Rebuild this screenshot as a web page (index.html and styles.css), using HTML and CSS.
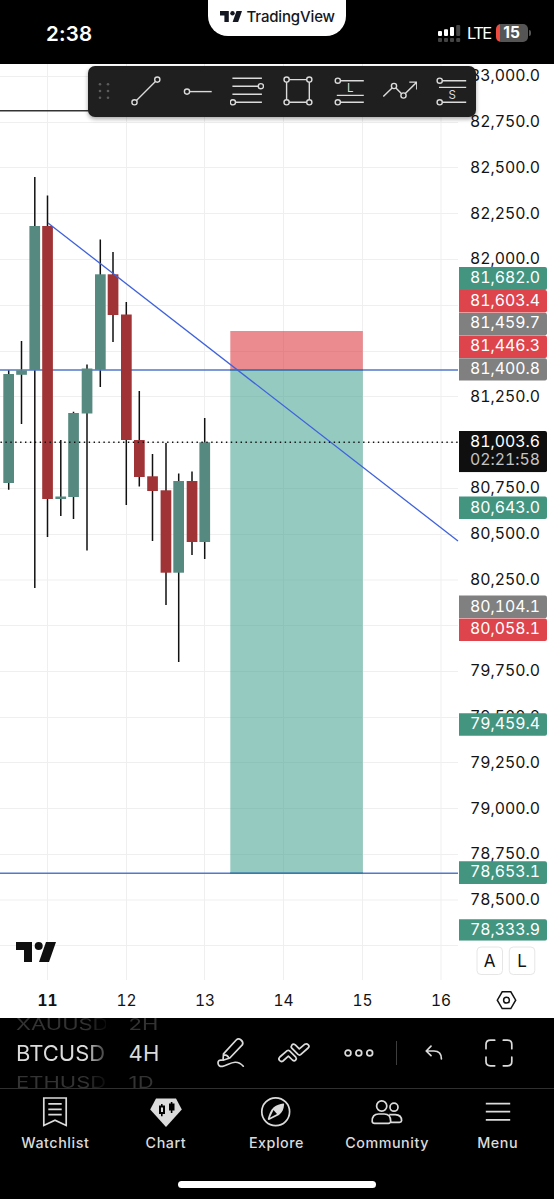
FILE: index.html
```html
<!DOCTYPE html>
<html lang="en">
<head>
    <meta charset="UTF-8">
    <meta name="viewport" content="width=device-width, initial-scale=1.0">
    <title>BTCUSD 4H - TradingView</title>
    <link rel="stylesheet" href="styles.css">
</head>
<body>
    <header class="status-bar">
        <div class="time">2:38</div>
        <div class="island">
            <svg class="island-logo" width="22" height="11" viewBox="0 0 40 20">
                <path d="M0 0H16V20H8V8H0Z"/><circle cx="22.7" cy="4" r="4"/><path d="M30 0H40L33 20H23Z"/>
            </svg>
            <span>TradingView</span>
        </div>
        <div class="status-right">
            <svg width="23" height="18" viewBox="0 0 23 18">
                <g fill="#fff">
                    <rect x="0" y="7" width="4" height="5" rx="1"/>
                    <rect x="6" y="5.3" width="4" height="6.7" rx="1"/>
                    <rect x="12" y="3" width="4" height="9" rx="1"/>
                </g>
                <g fill="#444">
                    <rect x="18.2" y="1" width="4" height="11" rx="1"/>
                    <rect x="0" y="14" width="4" height="4" rx="1"/>
                    <rect x="6" y="14" width="4" height="4" rx="1"/>
                    <rect x="12" y="14" width="4" height="4" rx="1"/>
                    <rect x="18.2" y="14" width="4" height="4" rx="1"/>
                </g>
            </svg>
            <span class="network">LTE</span>
            <div class="battery">15</div>
        </div>
    </header>

    <main class="chart">
        <svg class="chart-svg" width="554" height="954" viewBox="0 64 554 954">
            <!-- grid -->
            <path class="grid" d="M0 76.5H458M0 122.5H458M0 167.5H458M0 213.5H458M0 259.5H458M0 305.5H458M0 351.5H458M0 396.5H458M0 442.5H458M0 488.5H458M0 534.5H458M0 580H458M0 625.5H458M0 671.5H458M0 717.5H458M0 762.5H458M0 808.5H458M0 854.5H458M0 900H458M0 945.5H458"/>
            <path class="grid" d="M47.5 64V980M126.5 64V980M204.5 64V980M283.5 64V980M362.5 64V980M441 64V980"/>

            <path class="top-line" d="M0 110.8H458"/>

            <!-- wicks -->
            <path class="wick" d="M8.7 370V489.7M21.5 341V424M34.8 177V588M47.5 195.5V537M60.8 440V516M73.5 411.7V519M87 364.5V550.5M100.3 239.5V387M113 252V342M126.3 302V505M139.3 391V486.5M152.5 454V541M166 443V605M178.7 473.5V662M192 471.5V555M204.7 418V559"/>

            <path class="level" d="M0 370H458M0 873.2H458"/>

            <!-- candle bodies -->
            <g class="up">
                <rect x="3.3" y="374" width="10.7" height="109"/>
                <rect x="16.2" y="370.3" width="10.7" height="4.5"/>
                <rect x="29.4" y="226" width="10.7" height="144"/>
                <rect x="55.4" y="496.5" width="10.7" height="2.5"/>
                <rect x="68.2" y="413" width="10.7" height="84"/>
                <rect x="81.7" y="368.5" width="10.7" height="45"/>
                <rect x="95" y="274.3" width="10.7" height="95.5"/>
                <rect x="173.3" y="481" width="10.7" height="91.7"/>
                <rect x="199.4" y="442.3" width="10.7" height="99.7"/>
            </g>
            <g class="down">
                <rect x="42.2" y="226" width="10.7" height="273"/>
                <rect x="107.7" y="274.3" width="10.7" height="40.7"/>
                <rect x="121" y="314.5" width="10.7" height="125.5"/>
                <rect x="134" y="440" width="10.7" height="37"/>
                <rect x="147.2" y="476.3" width="10.7" height="14.7"/>
                <rect x="160.6" y="490.3" width="10.7" height="82.4"/>
                <rect x="186.7" y="481" width="10.7" height="61"/>
            </g>

            <!-- short position -->
            <rect class="box-stop" x="230.3" y="331" width="132.5" height="39"/>
            <rect class="box-profit" x="230.3" y="370" width="132.5" height="503"/>
            <path class="level level-box" d="M230 370H363M230 873.2H363"/>
            <path class="trend" d="M48 223L458 541"/>
            <path class="last-price" d="M0.5 442.3H458"/>

            <!-- price scale -->
            <g class="price">
                <text x="540" y="81.3">83,000.0</text>
                <text x="540" y="126.8">82,750.0</text>
                <text x="540" y="172.8">82,500.0</text>
                <text x="540" y="218.6">82,250.0</text>
                <text x="540" y="264">82,000.0</text>
                <text x="540" y="401.8">81,250.0</text>
                <text x="540" y="493">80,750.0</text>
                <text x="540" y="539">80,500.0</text>
                <text x="540" y="584.6">80,250.0</text>
                <text x="540" y="676.3">79,750.0</text>
                <text x="540" y="721.8">79,500.0</text>
                <text x="540" y="768">79,250.0</text>
                <text x="540" y="813.5">79,000.0</text>
                <text x="540" y="859.3">78,750.0</text>
                <text x="540" y="905">78,500.0</text>
            </g>
            <g class="tag tag-green">
                <rect x="457" y="267" width="90" height="23" rx="2"/>
                <rect x="457" y="496.5" width="90" height="22.5" rx="2"/>
                <rect x="457" y="713.3" width="90" height="22.5" rx="2"/>
                <rect x="457" y="861.3" width="90" height="22.7" rx="2"/>
                <rect x="457" y="919.3" width="90" height="21.5" rx="2"/>
            </g>
            <g class="tag tag-red">
                <rect x="457" y="290" width="90" height="22.5" rx="2"/>
                <rect x="457" y="335.5" width="90" height="22.5" rx="2"/>
                <rect x="457" y="618.5" width="90" height="22.5" rx="2"/>
            </g>
            <g class="tag tag-gray">
                <rect x="457" y="312.7" width="90" height="22.5" rx="2"/>
                <rect x="457" y="358.2" width="90" height="22.3" rx="2"/>
                <rect x="457" y="595.6" width="90" height="22.5" rx="2"/>
            </g>
            <g class="tag tag-black">
                <rect x="457" y="431" width="90" height="41.3" rx="2"/>
            </g>
            <g class="price price-tag">
                <text x="540" y="282.8">81,682.0</text>
                <text x="540" y="305.5">81,603.4</text>
                <text x="540" y="328.3">81,459.7</text>
                <text x="540" y="351.3">81,446.3</text>
                <text x="540" y="374">81,400.8</text>
                <text x="540" y="446.8">81,003.6</text>
                <text class="countdown" x="540" y="465.3">02:21:58</text>
                <text x="540" y="512.5">80,643.0</text>
                <text x="540" y="611.5">80,104.1</text>
                <text x="540" y="634.3">80,058.1</text>
                <text x="540" y="729.2">79,459.4</text>
                <text x="540" y="877">78,653.1</text>
                <text x="540" y="935.3">78,333.9</text>
            </g>

            <!-- time scale -->
            <g class="day">
                <text class="day-bold" x="47.5" y="1006.3">11</text>
                <text x="126.5" y="1006.3">12</text>
                <text x="205" y="1006.3">13</text>
                <text x="283.5" y="1006.3">14</text>
                <text x="362.5" y="1006.3">15</text>
                <text x="441" y="1006.3">16</text>
            </g>

            <g class="scale-btn">
                <rect x="477" y="947" width="25.5" height="27.5" rx="4"/>
                <rect x="509.3" y="947" width="25.5" height="27.5" rx="4"/>
                <text x="489.7" y="967">A</text>
                <text x="522" y="967">L</text>
            </g>
            <g class="scale-settings">
                <path d="M502.2 991.8H510.8L515.7 1000.2L510.8 1008.6H502.2L497.3 1000.2Z"/>
                <circle cx="506.5" cy="1000.2" r="2.9"/>
            </g>

            <g class="watermark">
                <path d="M16 942H32V962H24V950H16Z"/><circle cx="38.7" cy="946" r="4"/><path d="M46 942H56L49 962H39Z"/>
            </g>
        </svg>

        <div class="draw-bar">
            <svg class="handle" width="12" height="18" viewBox="0 0 12 18">
                <circle cx="2" cy="2.2" r="1.3"/><circle cx="10" cy="2.2" r="1.3"/>
                <circle cx="2" cy="9" r="1.3"/><circle cx="10" cy="9" r="1.3"/>
                <circle cx="2" cy="15.8" r="1.3"/><circle cx="10" cy="15.8" r="1.3"/>
            </svg>
            <svg class="tool" viewBox="0 0 34 34">
                <path d="M7.4 26.4L26.4 7.5"/>
                <circle cx="5.5" cy="28.3" r="2.6"/><circle cx="28.3" cy="5.6" r="2.6"/>
            </svg>
            <svg class="tool" viewBox="0 0 34 34">
                <path d="M9.6 17.6H31.7"/><circle cx="7" cy="17.6" r="2.6"/>
            </svg>
            <svg class="tool" viewBox="0 0 34 34">
                <path d="M2.4 4.3H31.9M2.4 12.2H28.3M2.4 20.3H31.9M5.5 28.3H31.9"/>
                <circle cx="30.9" cy="12.2" r="2.6"/><circle cx="2.9" cy="28.3" r="2.6"/>
            </svg>
            <svg class="tool" viewBox="0 0 34 34">
                <path d="M8.2 5.6H25.7M8.2 28.3H25.7M5.6 8.2V25.7M28.3 8.2V25.7"/>
                <circle cx="5.6" cy="5.6" r="2.6"/><circle cx="28.3" cy="5.6" r="2.6"/>
                <circle cx="5.6" cy="28.3" r="2.6"/><circle cx="28.3" cy="28.3" r="2.6"/>
            </svg>
            <svg class="tool" viewBox="0 0 34 34">
                <path d="M8.4 6.7H31.8M4.8 21.4H31.8M8.4 28.3H31.8"/>
                <circle cx="5.8" cy="6.7" r="2.6"/><circle cx="5.8" cy="28.3" r="2.6"/>
                <text x="18.3" y="18.2">L</text>
            </svg>
            <svg class="tool" viewBox="0 0 34 34">
                <path d="M0.3 22.5L9.1 13.9M12.9 13.9L18.6 19.7M22.3 19.6L33.6 8.3M26.3 8.1H33.8V15.6"/>
                <circle cx="11" cy="12" r="2.6"/><circle cx="20.5" cy="21.5" r="2.6"/>
            </svg>
            <svg class="tool" viewBox="0 0 34 34">
                <path d="M8.3 6.7H32.2M5 13.4H32.2M8.3 28.3H32.2"/>
                <circle cx="5.7" cy="6.7" r="2.6"/><circle cx="5.7" cy="28.3" r="2.6"/>
                <text x="18.3" y="25.2">S</text>
            </svg>
        </div>
    </main>

    <section class="symbol-bar">
        <div class="picker picker-symbol">
            <span class="dim">XAUUSD</span>
            <span>BTCUSD</span>
            <span class="dim">ETHUSD</span>
        </div>
        <div class="picker picker-interval">
            <span class="dim">2H</span>
            <span>4H</span>
            <span class="dim">1D</span>
        </div>
        <div class="actions">
            <svg width="28" height="30" viewBox="0 0 28 30">
                <path d="M6.5 15.8L19.2 2Q21.4 -0.2 24 2T25.5 6.6L12.8 20L6 22.2ZM6.8 16.8Q10.8 16.6 11.8 20.2M4.6 22.2Q1 21.8 1 25Q1.3 28.8 5.5 28.4C11 27.8 18.5 19.5 26.3 28.2"/>
            </svg>
            <svg width="32" height="20" viewBox="0 0 32 20">
                <path d="M1.8 14L9.2 7.6Q10.4 6.8 11.6 7.9L17.8 14.2Q19 15.8 17.6 17.2T14.4 17L10.4 13.2L5 18Q3.2 19.2 1.6 17.5T1.8 14Z"/>
                <path d="M17.3 1.9L21.3 5.9L26.9 1.2Q28.8 0.3 30.3 1.8T30.1 5L22.6 11.6Q21.3 12.5 20 11.4L13.8 5.1Q12.6 3.6 13.9 2T17.3 1.9Z"/>
            </svg>
            <svg width="30" height="8" viewBox="0 0 30 8">
                <circle cx="4" cy="4" r="2.9"/><circle cx="14.8" cy="4" r="2.9"/><circle cx="25.7" cy="4" r="2.9"/>
            </svg>
            <div class="divider"></div>
            <svg width="18" height="16" viewBox="0 0 18 16">
                <path d="M6 1.2L1.2 6L6 10.6M1.4 6H9Q16.4 6.2 16.4 13.8"/>
            </svg>
            <svg width="28" height="28" viewBox="0 0 28 28">
                <path d="M1 9.7V5.5Q1 1.2 5.5 1.2H9.7M18.3 1.2H22.5Q26.8 1.2 26.8 5.5V9.7M26.8 18.2V22.5Q26.8 26.8 22.5 26.8H18.3M9.7 26.8H5.5Q1 26.8 1 22.5V18.2"/>
            </svg>
        </div>
    </section>

    <nav class="tab-bar">
        <a class="tab">
            <svg viewBox="0 0 32 32">
                <path class="line" d="M4.8 2V29.5L16 24.3L27.2 29.5V2ZM9.3 7.8H22.7M9.3 13.3H22.7M9.3 18.7H22.7"/>
            </svg>
            <span>Watchlist</span>
        </a>
        <a class="tab">
            <svg viewBox="0 0 32 32">
                <path class="solid" d="M6 2.4H26L31.8 13.5L16 31L0.2 13.5Z"/>
                <path d="M9 9.5H11V8H12.6V9.5H15V18H12.6V20.3H11V18H9ZM19 7.5H20.8V6H22.4V7.5H24.5V14.5H22.4V17H20.8V14.5H19Z"/>
                <path class="solid" d="M11 11.6H13V16H11Z"/>
            </svg>
            <span>Chart</span>
        </a>
        <a class="tab">
            <svg viewBox="0 0 32 32">
                <circle class="line" cx="15.7" cy="15.7" r="13.9"/>
                <path class="solid" fill-rule="evenodd" d="M23.3 7.5Q24.3 7.4 24.1 8.5C23.7 13 22.5 16.4 19 18.9L9 23.9Q7.6 24.2 7.8 22.8C9 18.8 10.2 14.4 13.7 11.3C16.6 9 20 7.9 23.3 7.5ZM13.5 14.1L9.8 21.8L17 17.9Z"/>
            </svg>
            <span>Explore</span>
        </a>
        <a class="tab">
            <svg viewBox="0 0 32 32">
                <circle class="line" cx="10.7" cy="10" r="5.1"/>
                <circle class="line" cx="23" cy="11.2" r="4"/>
                <path class="line" d="M1.2 25.3Q1 18 7.6 18H13.2Q19.7 18 19.7 25.3Q19.6 27.3 17.5 27.3H3.5Q1.4 27.3 1.2 25.3ZM18.3 18.7H24.2Q30.6 19 30.6 24.6Q30.4 26.3 28.5 26.3H20"/>
            </svg>
            <span>Community</span>
        </a>
        <a class="tab">
            <svg viewBox="0 0 32 32">
                <path class="line" d="M3.8 7.7H28.2M3.8 15.7H28.2M3.8 23.8H28.2"/>
            </svg>
            <span>Menu</span>
        </a>
    </nav>
    <div class="home-indicator"></div>
</body>
</html>
```
FILE: styles.css
```css
* {
    margin: 0;
    padding: 0;
    box-sizing: border-box;
}
body {
    width: 554px;
    height: 1199px;
    background-color: #000;
    color: #dbdbdb;
    font-family: Inter, "Liberation Sans", sans-serif;
    display: flex;
    flex-direction: column;
    overflow: hidden;
}
svg {
    display: block;
    flex: none;
}

/* status bar */
.status-bar {
    height: 64px;
    display: grid;
    grid-template-columns: 208px 138px 1fr;
    flex: none;
    color: #fff;
}
.time {
    padding: 21px 0 0 46px;
    font-size: 20.5px;
    line-height: 25px;
    font-weight: 600;
    letter-spacing: 0.2px;
}
.island {
    height: 36px;
    background-color: #fff;
    color: #131722;
    border-radius: 0 0 20px 20px;
    display: flex;
    align-items: center;
    padding: 0 0 3px 12px;
    gap: 4.5px;
    font-size: 15px;
    font-weight: 500;
    letter-spacing: -0.15px;
}
.island-logo {
    fill: #131722;
}
.status-right {
    display: flex;
    align-items: center;
    height: 18px;
    margin: 24px 0 0 92px;
}
.network {
    width: 29px;
    padding-left: 6px;
    font-size: 16.5px;
    letter-spacing: -1.6px;
}
.battery {
    position: relative;
    width: 32px;
    height: 18px;
    margin-left: 6px;
    border-radius: 5px;
    background: linear-gradient(to right, #ee4b40 4.5px, #555 4.5px);
    font-size: 15.5px;
    font-weight: 700;
    line-height: 18px;
    text-align: center;
    padding-right: 1px;
}
.battery::after {
    content: '';
    position: absolute;
    left: 33px;
    top: 6px;
    width: 2px;
    height: 6px;
    border-radius: 0 2px 2px 0;
    background-color: #555;
}

/* chart */
.chart {
    position: relative;
    height: 954px;
    flex: none;
    background-color: #fff;
}
.grid {
    stroke: #efefef;
    stroke-width: 1;
}
.top-line {
    stroke: #333;
    stroke-width: 1.4;
}
.wick {
    stroke: #111;
    stroke-width: 1.5;
}
.level {
    stroke: #5378cc;
    stroke-width: 1.6;
}
.level-box {
    stroke: #3c78b0;
}
.trend {
    stroke: #3f62dc;
    stroke-width: 1.3;
}
.last-price {
    stroke: #111;
    stroke-width: 1.4;
    stroke-dasharray: 1.4 3.5;
}
.up {
    fill: #568980;
}
.down {
    fill: #a03336;
}
.box-stop {
    fill: rgba(219, 51, 59, 0.57);
}
.box-profit {
    fill: rgba(64, 160, 142, 0.56);
}
.price {
    font-size: 15.8px;
    font-variant-numeric: tabular-nums;
    letter-spacing: 0.02px;
    text-anchor: end;
    fill: #131313;
}
.price-tag {
    fill: #fff;
}
.countdown {
    fill: #c4c4c4;
}
/* only the right corners are rounded */
.tag {
    clip-path: inset(0 0 0 2px);
}
.tag-green {
    fill: #439580;
}
.tag-red {
    fill: #de444b;
}
.tag-gray {
    fill: #808080;
}
.tag-black {
    fill: #0f0f0f;
}
.day {
    font-size: 15.5px;
    font-variant-numeric: tabular-nums;
    text-anchor: middle;
    fill: #131313;
}
.day-bold {
    font-weight: 700;
}
.scale-btn {
    font-size: 17px;
    text-anchor: middle;
    fill: #131313;
}
.scale-btn rect {
    fill: #fff;
    stroke: #e6e6e6;
}
.scale-settings {
    fill: none;
    stroke: #131313;
    stroke-width: 1.5;
}
.watermark {
    fill: #0f0f0f;
}

/* floating drawing tools */
.draw-bar {
    position: absolute;
    left: 88px;
    top: 2px;
    width: 388px;
    height: 51px;
    padding: 0 9px 1px 10px;
    border-radius: 7px;
    background-color: #1f1f1f;
    box-shadow: 0 2px 4px rgba(0, 0, 0, 0.35);
    display: flex;
    align-items: center;
    gap: 16.8px;
}
.handle {
    margin-right: 2px;
    fill: #5c5c5c;
}
.tool {
    width: 34px;
    height: 34px;
    fill: none;
    stroke: #dbdbdb;
    stroke-width: 1.4;
}
.tool text {
    fill: #dbdbdb;
    stroke: none;
    font-size: 11.5px;
    text-anchor: middle;
}

/* symbol bar */
.symbol-bar {
    height: 71px;
    flex: none;
    display: flex;
    border-bottom: 1px solid #303030;
    overflow: hidden;
}
.picker {
    height: 70px;
    display: flex;
    flex-direction: column;
    justify-content: center;
    font-size: 22px;
    line-height: 29px;
}
.picker span {
    flex: none;
}
.picker .dim {
    color: #333;
    transform: scaleY(0.72);
}
.picker-symbol {
    width: 90px;
    margin-left: 16px;
    overflow: hidden;
    -webkit-mask-image: linear-gradient(to right, #000 70px, transparent 96px);
    mask-image: linear-gradient(to right, #000 70px, transparent 96px);
}
.picker-interval {
    width: 30px;
    margin-left: 22.5px;
    letter-spacing: 0.2px;
}
.actions {
    height: 70px;
    display: flex;
    align-items: center;
    margin-left: 58.5px;
}
.actions svg {
    fill: none;
    stroke: #dbdbdb;
    stroke-width: 1.7;
    stroke-linecap: round;
    stroke-linejoin: round;
    overflow: visible;
}
.actions svg:nth-child(2) {
    margin-left: 33px;
}
.actions svg:nth-child(3) {
    margin-left: 34px;
}
.divider {
    width: 1px;
    height: 24px;
    margin: 0 28px 0 22px;
    background-color: #3d3d3d;
}
.actions svg:last-child {
    margin-left: 41.5px;
}

/* tabs */
.tab-bar {
    height: 92px;
    flex: none;
    display: flex;
    padding: 7px 1px 0 0;
}
.tab {
    flex: 1 1 0;
    display: flex;
    flex-direction: column;
    align-items: center;
    gap: 6px;
    font-size: 14.3px;
    line-height: 18px;
    font-weight: 500;
    letter-spacing: 0.55px;
}
.tab svg {
    width: 32px;
    height: 32px;
}
.tab .line {
    fill: none;
    stroke: #dbdbdb;
    stroke-width: 1.7;
}
.tab .solid {
    fill: #dbdbdb;
}
.home-indicator {
    width: 198px;
    height: 7px;
    flex: none;
    margin-left: 178px;
    border-radius: 4px;
    background-color: #fff;
}
```
